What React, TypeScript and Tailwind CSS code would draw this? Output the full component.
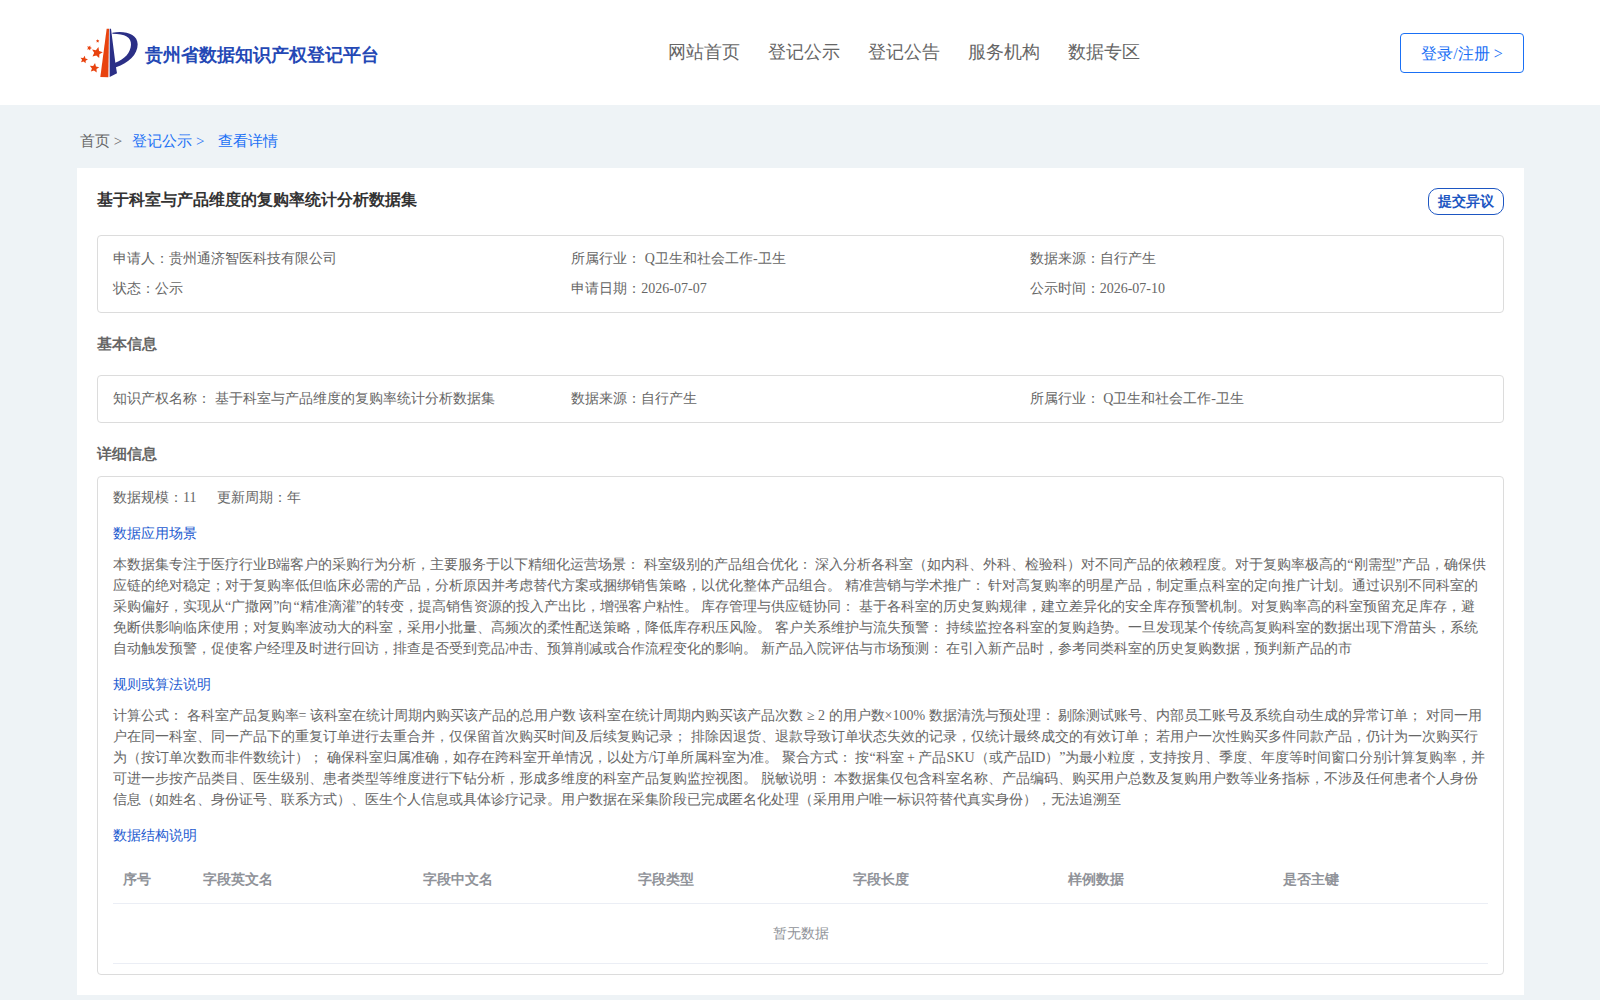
import React from "react";

const NAV = ["网站首页", "登记公示", "登记公告", "服务机构", "数据专区"];

const SUMMARY = [
  "申请人：贵州通济智医科技有限公司",
  "所属行业： Q卫生和社会工作-卫生",
  "数据来源：自行产生",
  "状态：公示",
  "申请日期：2026-07-07",
  "公示时间：2026-07-10",
];

const BASIC = [
  "知识产权名称： 基于科室与产品维度的复购率统计分析数据集",
  "数据来源：自行产生",
  "所属行业： Q卫生和社会工作-卫生",
];

const SCENE =
  "本数据集专注于医疗行业B端客户的采购行为分析，主要服务于以下精细化运营场景： 科室级别的产品组合优化： 深入分析各科室（如内科、外科、检验科）对不同产品的依赖程度。对于复购率极高的“刚需型”产品，确保供应链的绝对稳定；对于复购率低但临床必需的产品，分析原因并考虑替代方案或捆绑销售策略，以优化整体产品组合。 精准营销与学术推广： 针对高复购率的明星产品，制定重点科室的定向推广计划。通过识别不同科室的采购偏好，实现从“广撒网”向“精准滴灌”的转变，提高销售资源的投入产出比，增强客户粘性。 库存管理与供应链协同： 基于各科室的历史复购规律，建立差异化的安全库存预警机制。对复购率高的科室预留充足库存，避免断供影响临床使用；对复购率波动大的科室，采用小批量、高频次的柔性配送策略，降低库存积压风险。 客户关系维护与流失预警： 持续监控各科室的复购趋势。一旦发现某个传统高复购科室的数据出现下滑苗头，系统自动触发预警，促使客户经理及时进行回访，排查是否受到竞品冲击、预算削减或合作流程变化的影响。 新产品入院评估与市场预测： 在引入新产品时，参考同类科室的历史复购数据，预判新产品的市";

const RULES =
  "计算公式： 各科室产品复购率= 该科室在统计周期内购买该产品的总用户数 该科室在统计周期内购买该产品次数 ≥ 2 的用户数×100% 数据清洗与预处理： 剔除测试账号、内部员工账号及系统自动生成的异常订单； 对同一用户在同一科室、同一产品下的重复订单进行去重合并，仅保留首次购买时间及后续复购记录； 排除因退货、退款导致订单状态失效的记录，仅统计最终成交的有效订单； 若用户一次性购买多件同款产品，仍计为一次购买行为（按订单次数而非件数统计）； 确保科室归属准确，如存在跨科室开单情况，以处方/订单所属科室为准。 聚合方式： 按“科室 + 产品SKU（或产品ID）”为最小粒度，支持按月、季度、年度等时间窗口分别计算复购率，并可进一步按产品类目、医生级别、患者类型等维度进行下钻分析，形成多维度的科室产品复购监控视图。 脱敏说明： 本数据集仅包含科室名称、产品编码、购买用户总数及复购用户数等业务指标，不涉及任何患者个人身份信息（如姓名、身份证号、联系方式）、医生个人信息或具体诊疗记录。用户数据在采集阶段已完成匿名化处理（采用用户唯一标识符替代真实身份），无法追溯至";

const COLUMNS = ["字段英文名", "字段中文名", "字段类型", "字段长度", "样例数据", "是否主键"];

const STAR = "M0-10 2.8-3.6 9.5-3.1 4.6 1.5 5.9 8.1 0 5 -5.9 8.1 -4.6 1.5 -9.5-3.1 -2.8-3.6Z";

function Logo() {
  return (
    <svg viewBox="60 54 174 150" className="h-[50px] w-[58px] shrink-0" aria-hidden="true">
      <g fill="#e8430f">
        <path d="M140 56h7l-2 146-24-1Z" />
        <path d={STAR} transform="translate(111 128) rotate(14) scale(1.75)" />
        <path d={STAR} transform="translate(103 174) rotate(8) scale(1.5)" />
        <path d={STAR} transform="translate(72 149) rotate(12) scale(1.2)" />
        <path d={STAR} transform="translate(88 114) rotate(20) scale(.8)" />
        <path d={STAR} transform="translate(113 93) scale(.55)" />
      </g>
      <g fill="#2b2f86">
        <path d="M149 56h4l13 102c28-10 46-31 47-54 1-22-17-33-56-33v-3c37-7 76 3 76 35 0 31-27 56-65 69l3 18-22 11Z" />
      </g>
    </svg>
  );
}

function Facts({ items }: { items: string[] }) {
  return (
    <ul className="grid grid-cols-3 rounded border border-[#dcdcdc] px-[15px] py-2 leading-[30px]">
      {items.map((t) => (
        <li key={t}>{t}</li>
      ))}
    </ul>
  );
}

export default function App() {
  return (
    <div className="min-h-screen bg-[#eef3f6] pb-5 font-['Liberation_Serif',serif] text-sm text-[#666]">
      <header className="flex h-[105px] items-center justify-between bg-white pr-[76px] pl-20">
        <a href="#" className="flex items-center gap-[7px]">
          <Logo />
          <span className="pt-1 text-lg font-bold text-[#2448b5]">贵州省数据知识产权登记平台</span>
        </a>
        <nav className="flex gap-7 pb-[2px] pl-7 text-lg">
          {NAV.map((t) => (
            <a key={t} href="#">
              {t}
            </a>
          ))}
        </nav>
        <button className="h-10 w-[124px] rounded border border-[#1a70f5] pt-[2px] text-base text-[#1a70f5]">
          登录/注册 &gt;
        </button>
      </header>

      <main className="pr-[76px] pl-[77px]">
        <nav className="flex h-[63px] items-center pt-[11px] pl-[3px] text-[15px]">
          <a href="#">首页 &gt;</a>
          <a href="#" className="ml-[10px] text-[#1a70f5]">
            登记公示 &gt;
          </a>
          <a href="#" className="ml-[14px] text-[#1a70f5]">
            查看详情
          </a>
        </nav>

        <section className="bg-white p-5">
          <div className="mb-5 flex items-start justify-between">
            <h1 className="text-base font-bold text-[#333]">基于科室与产品维度的复购率统计分析数据集</h1>
            <button className="h-[27px] w-19 rounded-[10px] border border-[#1d56c2] text-sm font-bold text-[#1d56c2]">
              提交异议
            </button>
          </div>
          <Facts items={SUMMARY} />

          <h2 className="my-5 text-[15px] leading-[22px] font-bold">基本信息</h2>
          <Facts items={BASIC} />

          <h2 className="mt-5 mb-[11px] text-[15px] leading-[22px] font-bold">详细信息</h2>
          <div className="rounded border border-[#dcdcdc] px-[15px] py-[10px] leading-[21px]">
            <p className="flex gap-[21px]">
              <span>数据规模：11</span>
              <span>更新周期：年</span>
            </p>
            <h3 className="mt-[15px] mb-[10px] text-[#1d5bd0]">数据应用场景</h3>
            <p>{SCENE}</p>
            <h3 className="mt-[15px] mb-[10px] text-[#1d5bd0]">规则或算法说明</h3>
            <p>{RULES}</p>
            <h3 className="mt-[15px] mb-[10px] text-[#1d5bd0]">数据结构说明</h3>
            <table className="w-full table-fixed border-separate border-spacing-0 text-[#909399]">
              <colgroup>
                <col className="w-20" />
                <col className="w-[220px]" />
              </colgroup>
              <thead>
                <tr className="text-left">
                  <th className="h-12 border-b border-[#ebeef5] px-[10px] font-bold">序号</th>
                  {COLUMNS.map((c) => (
                    <th key={c} className="h-12 border-b border-[#ebeef5] px-[10px] font-bold">
                      {c}
                    </th>
                  ))}
                </tr>
              </thead>
              <tbody>
                <tr>
                  <td colSpan={7} className="h-[60px] border-b border-[#ebeef5] text-center">
                    暂无数据
                  </td>
                </tr>
              </tbody>
            </table>
          </div>
        </section>
      </main>
    </div>
  );
}
